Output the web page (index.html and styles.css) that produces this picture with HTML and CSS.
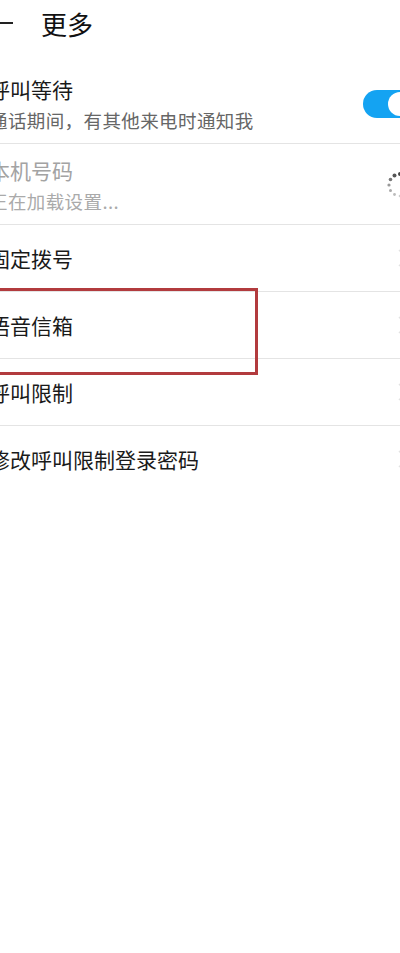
FILE: index.html
```html
<!DOCTYPE html>
<html lang="zh-CN">
	<head>
		<meta charset="UTF-8">
		<title>更多</title>
		<link rel="stylesheet" href="styles.css">
	</head>
	<body>
		<div class="page">
			<div class="header">
				<svg class="back" width="24" height="24" viewBox="0 0 24 24">
					<path d="M1 12H24M9 4L1 12L9 20" fill="none" stroke="#222" stroke-width="2"/>
				</svg>
				<h1>更多</h1>
			</div>
			<ul class="list">
				<li class="item two">
					<div class="text">
						<p class="title">呼叫等待</p>
						<p class="sub">通话期间，有其他来电时通知我</p>
					</div>
					<span class="switch"><span class="knob"></span></span>
				</li>
				<li class="item two disabled">
					<div class="text">
						<p class="title">本机号码</p>
						<p class="sub">正在加载设置...</p>
					</div>
					<svg class="spinner" width="28" height="28" viewBox="0 0 28 28">
						<circle cx="14" cy="3" r="2" fill="#444"/>
						<circle cx="8.5" cy="4.5" r="2" fill="#555"/>
						<circle cx="4.5" cy="8.5" r="1.8" fill="#777"/>
						<circle cx="3" cy="14" r="1.6" fill="#999"/>
						<circle cx="4.5" cy="19.5" r="1.5" fill="#aaa"/>
						<circle cx="8.5" cy="23.5" r="1.4" fill="#bbb"/>
						<circle cx="14" cy="25" r="1.3" fill="#ccc"/>
						<circle cx="19.5" cy="23.5" r="1.2" fill="#ddd"/>
					</svg>
				</li>
				<li class="item">
					<p class="title">固定拨号</p>
					<svg class="arrow" width="10" height="18" viewBox="0 0 10 18"><path d="M1 1L9 9L1 17" fill="none" stroke="#e2e2e2" stroke-width="1.5"/></svg>
				</li>
				<li class="item marked">
					<p class="title">语音信箱</p>
					<svg class="arrow" width="10" height="18" viewBox="0 0 10 18"><path d="M1 1L9 9L1 17" fill="none" stroke="#e2e2e2" stroke-width="1.5"/></svg>
					<span class="mark"></span>
				</li>
				<li class="item">
					<p class="title">呼叫限制</p>
					<svg class="arrow" width="10" height="18" viewBox="0 0 10 18"><path d="M1 1L9 9L1 17" fill="none" stroke="#e2e2e2" stroke-width="1.5"/></svg>
				</li>
				<li class="item last">
					<p class="title">修改呼叫限制登录密码</p>
					<svg class="arrow" width="10" height="18" viewBox="0 0 10 18"><path d="M1 1L9 9L1 17" fill="none" stroke="#e2e2e2" stroke-width="1.5"/></svg>
				</li>
			</ul>
		</div>
	</body>
</html>
```

FILE: styles.css
```css
*{
	margin: 0;
	padding: 0;
}
html,body{
	background: #ffffff;
	overflow: hidden;
}
body{
	width: 400px;
	height: 953px;
	font-family: "Noto Sans CJK SC", "Noto Sans", sans-serif;
	color: #1c1c1c;
}
.page{
	margin: 0 -14px 0 -11px;
}
.header{
	height: 48px;
	display: flex;
	align-items: center;
}
.back{
	display: block;
	margin-top: -2px;
}
.header h1{
	margin-left: 28px;
	font-size: 26px;
	font-weight: normal;
	line-height: 48px;
	color: #111;
}
.list{
	list-style: none;
	margin-top: 15px;
}
.item{
	position: relative;
	display: flex;
	align-items: center;
	justify-content: space-between;
	height: 66px;
	border-bottom: 1px solid #e4e4e4;
}
.item.two{
	height: auto;
	padding: 12px 0 11px;
}
.item.last{
	border-bottom: none;
}
.title{
	font-size: 21px;
	line-height: 28px;
	color: #1a1a1a;
}
.sub{
	margin-top: 5px;
	font-size: 18.5px;
	letter-spacing: 0.4px;
	line-height: 24px;
	color: #666;
}
.disabled .title{
	color: #a3a3a3;
}
.disabled .sub{
	color: #aaa;
}
.switch{
	position: relative;
	width: 51px;
	height: 28px;
	border-radius: 14px;
	background: #14a3f2;
}
.knob{
	position: absolute;
	top: 2px;
	right: 2px;
	width: 24px;
	height: 24px;
	border-radius: 50%;
	background: #ffffff;
}
.spinner{
	display: block;
}
.arrow{
	display: block;
	margin-right: 6px;
}
.mark{
	position: absolute;
	left: -10px;
	top: -4px;
	width: 273px;
	height: 81px;
	border: 3px solid #b23b3e;
}
```
